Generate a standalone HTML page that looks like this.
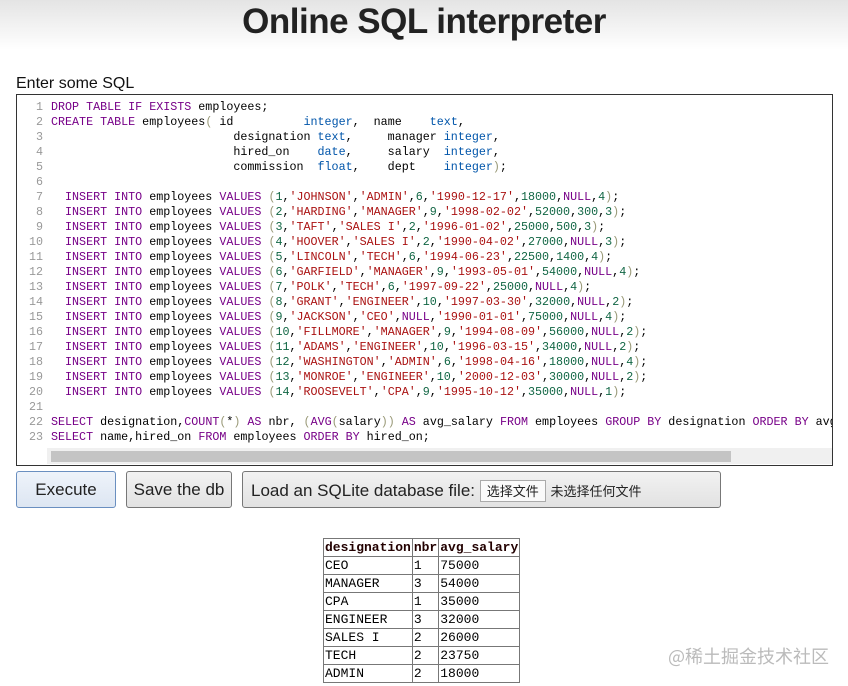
<!DOCTYPE html>
<html><head><meta charset="utf-8"><style>
body{margin:0;width:848px;height:686px;overflow:hidden;background:#fff;font-family:"Liberation Sans","Noto Sans CJK SC",sans-serif;position:relative}
.hdr{position:absolute;left:0;top:0;width:848px;height:50px;background:linear-gradient(#e4e4e4,#fff)}
h1{position:absolute;top:2px;left:0;width:848px;text-align:center;margin:0;font-size:35px;font-weight:bold;color:#222;letter-spacing:-0.5px}
.lbl{position:absolute;left:16px;top:75px;font-size:16px;color:#111}
.ed{position:absolute;left:16px;top:94px;width:815px;height:370px;border:1px solid #333;overflow:hidden;background:#fff}
.code{position:absolute;left:0;top:5px;font-family:"Liberation Mono",monospace;font-size:11.7px;line-height:15px;white-space:pre;color:#000}
.ln{display:inline-block;width:26px;text-align:right;color:#999;margin-right:8px}
.k{color:#708}.t{color:#05a}.s{color:#a11}.n{color:#164}.b{color:#997}
.sb{position:absolute;left:30px;top:353px;width:785px;height:16px;background:#f0f0f0}
.th{position:absolute;left:34px;top:356px;width:680px;height:11px;background:#c4c4c4}
.btn{position:absolute;top:471px;height:37px;border:1px solid #777;border-radius:3px;background:linear-gradient(#f2f2f2,#e2e2e2);font-size:17px;color:#222;line-height:35px;box-sizing:border-box;white-space:nowrap}
.fb{display:inline-block;font-size:13px;line-height:20px;border:1px solid #aaa;background:#fafafa;height:22px;box-sizing:border-box;padding:0 6px;vertical-align:middle;font-family:"Noto Sans CJK SC",sans-serif}
.ft{font-size:13px;font-family:'Noto Sans CJK SC',sans-serif;vertical-align:middle}
table{position:absolute;left:323px;top:538px;border-collapse:collapse;font-family:"Liberation Mono",monospace;font-size:13px}
td,th{border:1px solid #777;padding:0 1px;height:17px;line-height:17px;text-align:left}
th{font-weight:bold;color:#200}
.wm{position:absolute;left:668px;top:643px;font-size:18px;color:#bbb;font-family:"Noto Sans CJK SC",sans-serif}
</style></head><body>
<div class="hdr"></div>
<h1>Online SQL interpreter</h1>
<div class="lbl">Enter some SQL</div>
<div class="ed"><div class="code"><span class="ln">1</span><span class="k">DROP TABLE IF EXISTS</span> employees;
<span class="ln">2</span><span class="k">CREATE TABLE</span> employees<span class="b">(</span> id          <span class="t">integer</span>,  name    <span class="t">text</span>,
<span class="ln">3</span>                          designation <span class="t">text</span>,     manager <span class="t">integer</span>,
<span class="ln">4</span>                          hired_on    <span class="t">date</span>,     salary  <span class="t">integer</span>,
<span class="ln">5</span>                          commission  <span class="t">float</span>,    dept    <span class="t">integer</span><span class="b">)</span>;
<span class="ln">6</span>
<span class="ln">7</span>  <span class="k">INSERT INTO</span> employees <span class="k">VALUES</span> <span class="b">(</span><span class="n">1</span>,<span class="s">'JOHNSON'</span>,<span class="s">'ADMIN'</span>,<span class="n">6</span>,<span class="s">'1990-12-17'</span>,<span class="n">18000</span>,<span class="k">NULL</span>,<span class="n">4</span><span class="b">)</span>;
<span class="ln">8</span>  <span class="k">INSERT INTO</span> employees <span class="k">VALUES</span> <span class="b">(</span><span class="n">2</span>,<span class="s">'HARDING'</span>,<span class="s">'MANAGER'</span>,<span class="n">9</span>,<span class="s">'1998-02-02'</span>,<span class="n">52000</span>,<span class="n">300</span>,<span class="n">3</span><span class="b">)</span>;
<span class="ln">9</span>  <span class="k">INSERT INTO</span> employees <span class="k">VALUES</span> <span class="b">(</span><span class="n">3</span>,<span class="s">'TAFT'</span>,<span class="s">'SALES I'</span>,<span class="n">2</span>,<span class="s">'1996-01-02'</span>,<span class="n">25000</span>,<span class="n">500</span>,<span class="n">3</span><span class="b">)</span>;
<span class="ln">10</span>  <span class="k">INSERT INTO</span> employees <span class="k">VALUES</span> <span class="b">(</span><span class="n">4</span>,<span class="s">'HOOVER'</span>,<span class="s">'SALES I'</span>,<span class="n">2</span>,<span class="s">'1990-04-02'</span>,<span class="n">27000</span>,<span class="k">NULL</span>,<span class="n">3</span><span class="b">)</span>;
<span class="ln">11</span>  <span class="k">INSERT INTO</span> employees <span class="k">VALUES</span> <span class="b">(</span><span class="n">5</span>,<span class="s">'LINCOLN'</span>,<span class="s">'TECH'</span>,<span class="n">6</span>,<span class="s">'1994-06-23'</span>,<span class="n">22500</span>,<span class="n">1400</span>,<span class="n">4</span><span class="b">)</span>;
<span class="ln">12</span>  <span class="k">INSERT INTO</span> employees <span class="k">VALUES</span> <span class="b">(</span><span class="n">6</span>,<span class="s">'GARFIELD'</span>,<span class="s">'MANAGER'</span>,<span class="n">9</span>,<span class="s">'1993-05-01'</span>,<span class="n">54000</span>,<span class="k">NULL</span>,<span class="n">4</span><span class="b">)</span>;
<span class="ln">13</span>  <span class="k">INSERT INTO</span> employees <span class="k">VALUES</span> <span class="b">(</span><span class="n">7</span>,<span class="s">'POLK'</span>,<span class="s">'TECH'</span>,<span class="n">6</span>,<span class="s">'1997-09-22'</span>,<span class="n">25000</span>,<span class="k">NULL</span>,<span class="n">4</span><span class="b">)</span>;
<span class="ln">14</span>  <span class="k">INSERT INTO</span> employees <span class="k">VALUES</span> <span class="b">(</span><span class="n">8</span>,<span class="s">'GRANT'</span>,<span class="s">'ENGINEER'</span>,<span class="n">10</span>,<span class="s">'1997-03-30'</span>,<span class="n">32000</span>,<span class="k">NULL</span>,<span class="n">2</span><span class="b">)</span>;
<span class="ln">15</span>  <span class="k">INSERT INTO</span> employees <span class="k">VALUES</span> <span class="b">(</span><span class="n">9</span>,<span class="s">'JACKSON'</span>,<span class="s">'CEO'</span>,<span class="k">NULL</span>,<span class="s">'1990-01-01'</span>,<span class="n">75000</span>,<span class="k">NULL</span>,<span class="n">4</span><span class="b">)</span>;
<span class="ln">16</span>  <span class="k">INSERT INTO</span> employees <span class="k">VALUES</span> <span class="b">(</span><span class="n">10</span>,<span class="s">'FILLMORE'</span>,<span class="s">'MANAGER'</span>,<span class="n">9</span>,<span class="s">'1994-08-09'</span>,<span class="n">56000</span>,<span class="k">NULL</span>,<span class="n">2</span><span class="b">)</span>;
<span class="ln">17</span>  <span class="k">INSERT INTO</span> employees <span class="k">VALUES</span> <span class="b">(</span><span class="n">11</span>,<span class="s">'ADAMS'</span>,<span class="s">'ENGINEER'</span>,<span class="n">10</span>,<span class="s">'1996-03-15'</span>,<span class="n">34000</span>,<span class="k">NULL</span>,<span class="n">2</span><span class="b">)</span>;
<span class="ln">18</span>  <span class="k">INSERT INTO</span> employees <span class="k">VALUES</span> <span class="b">(</span><span class="n">12</span>,<span class="s">'WASHINGTON'</span>,<span class="s">'ADMIN'</span>,<span class="n">6</span>,<span class="s">'1998-04-16'</span>,<span class="n">18000</span>,<span class="k">NULL</span>,<span class="n">4</span><span class="b">)</span>;
<span class="ln">19</span>  <span class="k">INSERT INTO</span> employees <span class="k">VALUES</span> <span class="b">(</span><span class="n">13</span>,<span class="s">'MONROE'</span>,<span class="s">'ENGINEER'</span>,<span class="n">10</span>,<span class="s">'2000-12-03'</span>,<span class="n">30000</span>,<span class="k">NULL</span>,<span class="n">2</span><span class="b">)</span>;
<span class="ln">20</span>  <span class="k">INSERT INTO</span> employees <span class="k">VALUES</span> <span class="b">(</span><span class="n">14</span>,<span class="s">'ROOSEVELT'</span>,<span class="s">'CPA'</span>,<span class="n">9</span>,<span class="s">'1995-10-12'</span>,<span class="n">35000</span>,<span class="k">NULL</span>,<span class="n">1</span><span class="b">)</span>;
<span class="ln">21</span>
<span class="ln">22</span><span class="k">SELECT</span> designation,<span class="k">COUNT</span><span class="b">(</span>*<span class="b">)</span> <span class="k">AS</span> nbr, <span class="b">(</span><span class="k">AVG</span><span class="b">(</span>salary<span class="b">))</span> <span class="k">AS</span> avg_salary <span class="k">FROM</span> employees <span class="k">GROUP BY</span> designation <span class="k">ORDER BY</span> avg_salary <span class="k">DESC</span>;
<span class="ln">23</span><span class="k">SELECT</span> name,hired_on <span class="k">FROM</span> employees <span class="k">ORDER BY</span> hired_on;</div>
<div class="sb"></div><div class="th"></div></div>
<div class="btn" style="left:16px;width:100px;text-align:center;border-color:#6a8fc0;background:linear-gradient(#eef3fa,#dde6f2)">Execute</div>
<div class="btn" style="left:126px;width:106px;text-align:center">Save the db</div>
<div class="btn" style="left:242px;width:479px;padding-left:8px"><span style="vertical-align:middle">Load an SQLite database file:</span> <span class="fb">选择文件</span> <span class="ft">未选择任何文件</span></div>
<table>
<tr><th>designation</th><th>nbr</th><th>avg_salary</th></tr>
<tr><td>CEO</td><td>1</td><td>75000</td></tr>
<tr><td>MANAGER</td><td>3</td><td>54000</td></tr>
<tr><td>CPA</td><td>1</td><td>35000</td></tr>
<tr><td>ENGINEER</td><td>3</td><td>32000</td></tr>
<tr><td>SALES I</td><td>2</td><td>26000</td></tr>
<tr><td>TECH</td><td>2</td><td>23750</td></tr>
<tr><td>ADMIN</td><td>2</td><td>18000</td></tr>
</table>
<div class="wm">@稀土掘金技术社区</div>
</body></html>
